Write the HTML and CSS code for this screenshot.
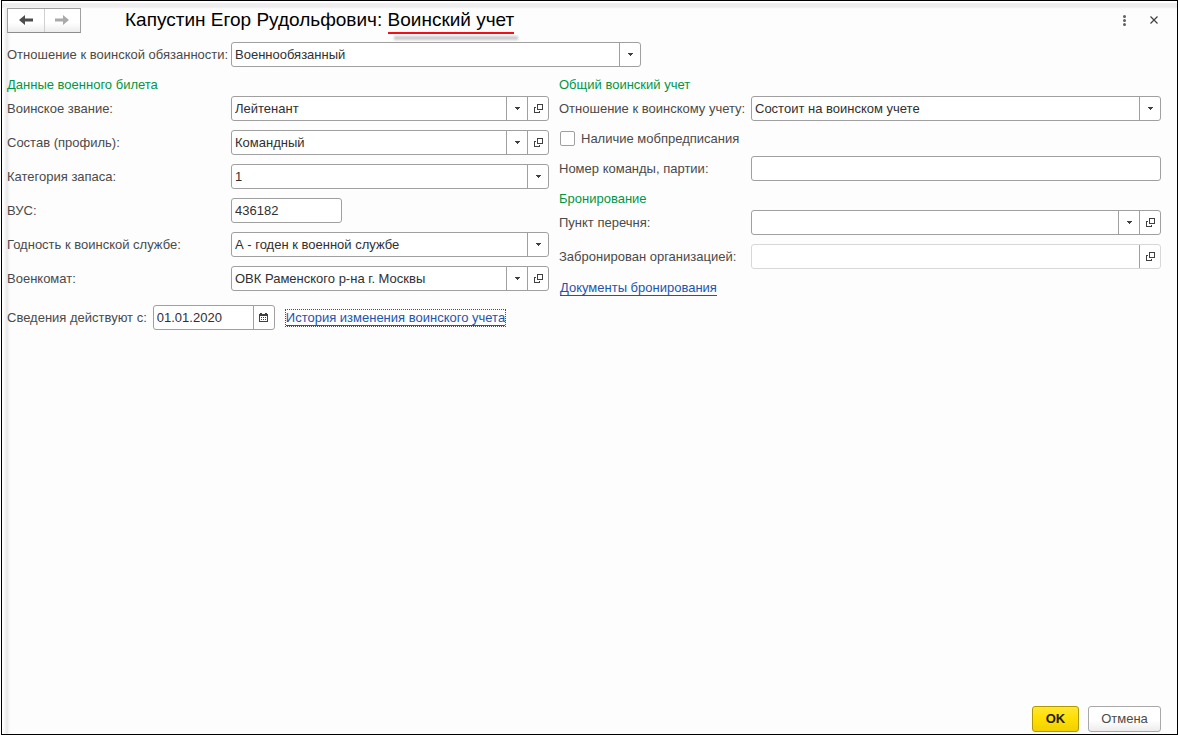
FILE: index.html
```html
<!DOCTYPE html>
<html lang="ru">
<head>
<meta charset="utf-8">
<meta name="viewport" content="width=device-width, initial-scale=1">
<title>Воинский учет</title>
<link rel="stylesheet" href="styles.css">
</head>
<body>
<svg class="symbols" aria-hidden="true">
  <symbol id="caret" viewBox="0 0 5 3"><path d="M0 0h5v1H4v1H3v1H2V2H1V1H0z"/></symbol>
  <symbol id="open" viewBox="0 0 9 9"><path fill-rule="evenodd" d="M3 0h6v6H3zM4 1v4h4V1zM0 3h2v1H1v4h4V7h1v2H0z"/></symbol>
</svg>
<form class="window">
  <header class="titlebar">
    <div class="nav">
      <button type="button" class="nav-btn" aria-label="Назад"><svg width="14" height="12" viewBox="0 0 14 12"><path d="M0 6l6-5v3.500h8v3H6V11z"/></svg></button>
      <button type="button" class="nav-btn nav-btn-off" aria-label="Вперед"><svg width="14" height="12" viewBox="0 0 14 12"><path d="M14 6L8 1v3.500H0v3h8V11z"/></svg></button>
    </div>
    <h1 class="title">Капустин Егор Рудольфович: <span class="mark">Воинский учет</span></h1>
    <button type="button" class="icon-btn" aria-label="Меню"><svg class="dots" width="3" height="11" viewBox="0 0 3 11"><circle cx="1.500" cy="1.500" r="1.500"/><circle cx="1.500" cy="5.500" r="1.500"/><circle cx="1.500" cy="9.500" r="1.500"/></svg></button>
    <button type="button" class="icon-btn" aria-label="Закрыть"><svg width="8" height="8" viewBox="0 0 8 8"><path class="stroke" d="M.5.5l7 7M7.500.5l-7 7"/></svg></button>
  </header>

  <div class="row row-top">
    <label for="duty">Отношение к воинской обязанности:</label>
    <div class="field field-duty">
      <div class="combo"><select id="duty"><option>Военнообязанный</option></select><span class="cell"><svg width="5" height="3"><use href="#caret"/></svg></span></div>
    </div>
  </div>

  <main class="columns">
    <section class="column">
      <h2 class="group">Данные военного билета</h2>
      <div class="row">
        <label for="rank">Воинское звание:</label>
        <div class="field">
          <div class="combo"><select id="rank"><option>Лейтенант</option></select><span class="cell"><svg width="5" height="3"><use href="#caret"/></svg></span></div>
          <button type="button" class="cell" aria-label="Открыть"><svg width="9" height="9"><use href="#open"/></svg></button>
        </div>
      </div>
      <div class="row">
        <label for="profile">Состав (профиль):</label>
        <div class="field">
          <div class="combo"><select id="profile"><option>Командный</option></select><span class="cell"><svg width="5" height="3"><use href="#caret"/></svg></span></div>
          <button type="button" class="cell" aria-label="Открыть"><svg width="9" height="9"><use href="#open"/></svg></button>
        </div>
      </div>
      <div class="row">
        <label for="reserve">Категория запаса:</label>
        <div class="field">
          <div class="combo"><select id="reserve"><option>1</option></select><span class="cell"><svg width="5" height="3"><use href="#caret"/></svg></span></div>
        </div>
      </div>
      <div class="row">
        <label for="vus">ВУС:</label>
        <div class="field field-code"><input id="vus" type="text" value="436182"></div>
      </div>
      <div class="row">
        <label for="fitness">Годность к воинской службе:</label>
        <div class="field">
          <div class="combo"><select id="fitness"><option>А - годен к военной службе</option></select><span class="cell"><svg width="5" height="3"><use href="#caret"/></svg></span></div>
        </div>
      </div>
      <div class="row">
        <label for="office">Военкомат:</label>
        <div class="field">
          <div class="combo"><select id="office"><option>ОВК Раменского р-на г. Москвы</option></select><span class="cell"><svg width="5" height="3"><use href="#caret"/></svg></span></div>
          <button type="button" class="cell" aria-label="Открыть"><svg width="9" height="9"><use href="#open"/></svg></button>
        </div>
      </div>
      <div class="dates">
        <label for="since">Сведения действуют с:</label>
        <div class="field field-date">
          <input id="since" type="text" value="01.01.2020">
          <button type="button" class="cell" aria-label="Выбрать дату"><svg width="9" height="9" viewBox="0 0 9 9"><path fill-rule="evenodd" d="M0 1h1V0h2v1h3V0h2v1h1v8H0zM1 3v5h7V3zM2 4h1v1H2zM4 4h1v1H4zM6 4h1v1H6zM2 6h1v1H2zM4 6h1v1H4zM6 6h1v1H6z"/></svg></button>
        </div>
        <a class="link link-focus" href="#history">История изменения воинского учета</a>
      </div>
    </section>

    <section class="column column-right">
      <h2 class="group">Общий воинский учет</h2>
      <div class="row">
        <label for="status">Отношение к воинскому учету:</label>
        <div class="field">
          <div class="combo"><select id="status"><option>Состоит на воинском учете</option></select><span class="cell"><svg width="5" height="3"><use href="#caret"/></svg></span></div>
        </div>
      </div>
      <div class="check">
        <input type="checkbox" id="mob"><label for="mob">Наличие мобпредписания</label>
      </div>
      <div class="row">
        <label for="team">Номер команды, партии:</label>
        <div class="field"><input id="team" type="text"></div>
      </div>
      <h2 class="group">Бронирование</h2>
      <div class="row">
        <label for="item">Пункт перечня:</label>
        <div class="field">
          <div class="combo"><select id="item"><option></option></select><span class="cell"><svg width="5" height="3"><use href="#caret"/></svg></span></div>
          <button type="button" class="cell" aria-label="Открыть"><svg width="9" height="9"><use href="#open"/></svg></button>
        </div>
      </div>
      <div class="row">
        <label for="org">Забронирован организацией:</label>
        <div class="field field-readonly">
          <input id="org" type="text" readonly>
          <button type="button" class="cell" aria-label="Открыть"><svg width="9" height="9"><use href="#open"/></svg></button>
        </div>
      </div>
      <div class="docs"><a class="link" href="#docs">Документы бронирования</a></div>
    </section>
  </main>

  <footer class="actions">
    <button type="button" class="btn btn-primary">OK</button>
    <button type="button" class="btn">Отмена</button>
  </footer>
</form>
</body>
</html>
```
FILE: styles.css
```css
* { box-sizing: border-box; }

body {
  margin: 0 0 0 1px;
  background: #fff;
  color: #4a4a4a;
  font: 13px/16px "Liberation Sans", Arial, sans-serif;
}

button, input, select { font: inherit; color: inherit; }
svg { display: block; fill: #404040; }
.symbols { position: absolute; width: 0; height: 0; }
.stroke { fill: none; stroke: #404040; stroke-width: 1.2; }
.dots { fill: #606060; }

.window {
  display: flex;
  flex-direction: column;
  min-height: 100vh;
  padding: 6px 16px 2px 5px;
  border: 1px solid #000;
  background:
    linear-gradient(#fff 2px, #f0eef0 2px, #ececec 6px, #f8f8f8 7px, transparent 8px),
    linear-gradient(90deg, #fff 1px, #f4f4f4 3px, #e9e9e9 5px, #f7f7f7 7px, transparent 9px),
    #fdfdfd;
}

.titlebar { display: flex; align-items: center; height: 26px; }

.nav {
  display: flex;
  width: 74px;
  height: 25px;
  border: 1px solid #a0a0a0;
  border-bottom-color: #8c8c8c;
  background: linear-gradient(#fff 60%, #ececec);
}

.nav-btn {
  display: flex;
  flex: 1;
  align-items: center;
  justify-content: center;
  padding: 0;
  border: 0;
  background: none;
}

.nav-btn svg { fill: #4c4c4c; }
.nav-btn-off { border-left: 1px solid #d0d0d0; }
.nav-btn-off svg { fill: #aaa; }

.title {
  flex: 1;
  margin: 0 0 0 44px;
  color: #000;
  font-size: 19px;
  font-weight: 400;
  line-height: 24px;
}

.mark {
  position: relative;
  padding-bottom: 2px;
  border-bottom: 2px solid #f01018;
}

/* soft shadow cast by the red underline */
.mark::after {
  position: absolute;
  top: 100%;
  right: -4px;
  left: 6px;
  height: 4px;
  margin-top: 4px;
  background: #ccc;
  content: "";
  filter: blur(1px);
}

.icon-btn {
  display: flex;
  align-items: center;
  justify-content: center;
  width: 30px;
  height: 24px;
  padding: 0;
  border: 0;
  background: none;
}

.icon-btn:last-child { margin-right: -8px; }

.row {
  display: grid;
  grid-template-columns: 224px 1fr;
  align-items: center;
  margin-bottom: 9px;
}

.row-top { margin: 9px 0; }

.columns {
  display: grid;
  grid-template-columns: 542px 1fr;
  column-gap: 10px;
}

.column-right .row { grid-template-columns: 192px 1fr; }

.group {
  margin: 0 0 3px;
  padding-top: 1px;
  color: #009646;
  font: inherit;
}

.field {
  display: flex;
  min-width: 0;
  height: 25px;
  border: 1px solid #a0a0a0;
  border-radius: 3px;
  background: #fff;
  color: #303030;
}

.field-duty { width: 410px; }
.field-code { width: 111px; }
.field-date { width: 122px; }
.field-readonly { border-color: #d8d8d8; }

.combo {
  display: grid;
  flex: 1;
  grid-template-columns: 1fr 21px;
  min-width: 0;
}

.combo select { grid-area: 1 / 1 / 2 / 3; }
.combo .cell { grid-area: 1 / 2; pointer-events: none; }

.field select, .field input {
  flex: 1;
  width: 100%;
  min-width: 0;
  padding: 0 3px;
  border: 0;
  outline: 0;
  background: none;
  appearance: none;
}

.cell {
  display: flex;
  flex: none;
  align-items: center;
  justify-content: center;
  width: 21px;
  padding: 0;
  border: 0;
  border-left: 1px solid #a0a0a0;
  background: none;
}

.dates { display: flex; align-items: center; margin-top: 14px; }
.dates .field { margin: 0 10px 0 6px; }

.check { display: flex; align-items: center; gap: 6px; height: 17px; margin-bottom: 9px; }

.check input {
  width: 15px;
  height: 15px;
  margin: 0 0 0 1px;
  border: 1px solid #a0a0a0;
  border-radius: 2px;
  background: #fff;
  appearance: none;
}

.link {
  border-bottom: 1px solid #1c55ae;
  color: #1c55ae;
  line-height: 15px;
  text-decoration: none;
}

.link-focus { outline: 1px dotted #505050; margin-left: 1px; }
.docs { padding: 2px 1px; }

.actions {
  display: flex;
  justify-content: flex-end;
  gap: 9px;
  margin-top: auto;
}

.btn {
  width: 73px;
  height: 26px;
  padding: 0;
  border: 1px solid #a8a8a8;
  border-radius: 3px;
  background: linear-gradient(#fff 55%, #ececec);
}

.btn-primary {
  width: 47px;
  border-color: #b09800;
  background: linear-gradient(#ffe632, #ffdf00 50%, #f0d000);
  color: #202020;
  font-weight: 700;
}
```
